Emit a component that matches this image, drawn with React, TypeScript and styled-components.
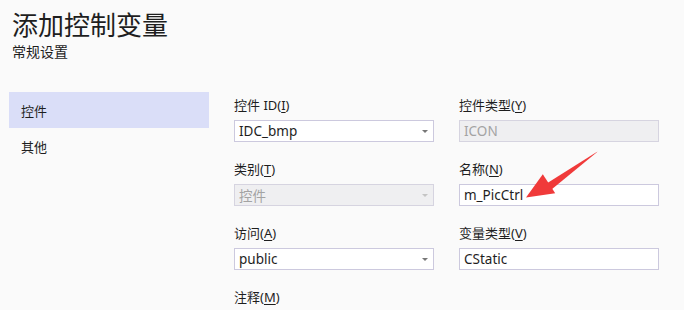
import React from 'react'
import styled, { createGlobalStyle } from 'styled-components'

const GlobalStyle = createGlobalStyle`
  html, body {
    margin: 0;
    padding: 0;
    background: #fafafa;
  }
  body {
    font-family: "Noto Sans", "Noto Sans CJK SC", sans-serif;
    color: #1e1e1e;
  }
`

const Page = styled.div`
  position: relative;
  width: 684px;
  height: 310px;
  overflow: hidden;
  background: #fafafa;
`

const Header = styled.header`
  padding: 9px 0 0 12px;
`

const Title = styled.h1`
  margin: 0;
  font-size: 26px;
  line-height: 33px;
  font-weight: 400;
  color: #1e1e1e;
`

const Subtitle = styled.div`
  margin-top: 1px;
  font-size: 14px;
  line-height: 18px;
  color: #1e1e1e;
`

const Body = styled.div`
  display: flex;
  align-items: flex-start;
  margin-top: 31px;
  padding-left: 9px;
`

const Nav = styled.nav`
  width: 200px;
  display: flex;
  flex-direction: column;
`

const NavItem = styled.div<{ $active?: boolean }>`
  height: 36px;
  display: flex;
  align-items: center;
  padding-left: 12px;
  font-size: 13px;
  color: #1e1e1e;
  background: ${p => (p.$active ? '#dadef8' : 'transparent')};
`

const Form = styled.div`
  margin-left: 25px;
  padding-top: 4px;
  display: grid;
  grid-template-columns: 200px 200px;
  column-gap: 25px;
  row-gap: 18px;
`

const Field = styled.div`
  display: flex;
  flex-direction: column;
`

const Label = styled.label`
  font-size: 13px;
  line-height: 18px;
  margin-bottom: 6px;
  color: #1e1e1e;
  u {
    text-decoration: underline;
    text-underline-offset: 2px;
  }
`

const Box = styled.div<{ $disabled?: boolean }>`
  height: 22px;
  box-sizing: border-box;
  border: 1px solid ${p => (p.$disabled ? '#d6d4e0' : '#ccc9de')};
  background: ${p => (p.$disabled ? '#efeff1' : '#ffffff')};
  color: ${p => (p.$disabled ? '#a3a3a3' : '#1e1e1e')};
  font-size: 13.5px;
  display: flex;
  align-items: center;
  justify-content: space-between;
  padding: 0 5px 0 4px;
`

const Caret = styled.span<{ $disabled?: boolean }>`
  width: 0;
  height: 0;
  border-left: 3px solid transparent;
  border-right: 3px solid transparent;
  border-top: 3px solid ${p => (p.$disabled ? '#c4c4c4' : '#777')};
  margin-top: 1px;
`

const Overlay = styled.svg`
  position: absolute;
  left: 0;
  top: 0;
  pointer-events: none;
`

type FieldProps = {
  label: string
  hotkey: string
  value?: string
  select?: boolean
  disabled?: boolean
}

const FormField = ({ label, hotkey, value, select, disabled }: FieldProps) => (
  <Field>
    <Label>
      {label}(<u>{hotkey}</u>)
    </Label>
    {value !== undefined && (
      <Box $disabled={disabled}>
        <span>{value}</span>
        {select && <Caret $disabled={disabled} />}
      </Box>
    )}
  </Field>
)

const Arrow = () => (
  <Overlay width="684" height="310" viewBox="0 0 684 310">
    <polygon
      points="597.5,151.4 596.6,152.6 551.5,189.4 547.4,183.1"
      fill="#f03a3a"
    />
    <polygon points="526,197.5 555.2,193.2 542.8,174.2" fill="#f03a3a" />
  </Overlay>
)

export default function App() {
  return (
    <Page>
      <GlobalStyle />
      <Header>
        <Title>添加控制变量</Title>
        <Subtitle>常规设置</Subtitle>
      </Header>
      <Body>
        <Nav>
          <NavItem $active>控件</NavItem>
          <NavItem>其他</NavItem>
        </Nav>
        <Form>
          <FormField label="控件 ID" hotkey="I" value="IDC_bmp" select />
          <FormField label="控件类型" hotkey="Y" value="ICON" disabled />
          <FormField label="类别" hotkey="T" value="控件" select disabled />
          <FormField label="名称" hotkey="N" value="m_PicCtrl" />
          <FormField label="访问" hotkey="A" value="public" select />
          <FormField label="变量类型" hotkey="V" value="CStatic" />
          <FormField label="注释" hotkey="M" />
        </Form>
      </Body>
      <Arrow />
    </Page>
  )
}
